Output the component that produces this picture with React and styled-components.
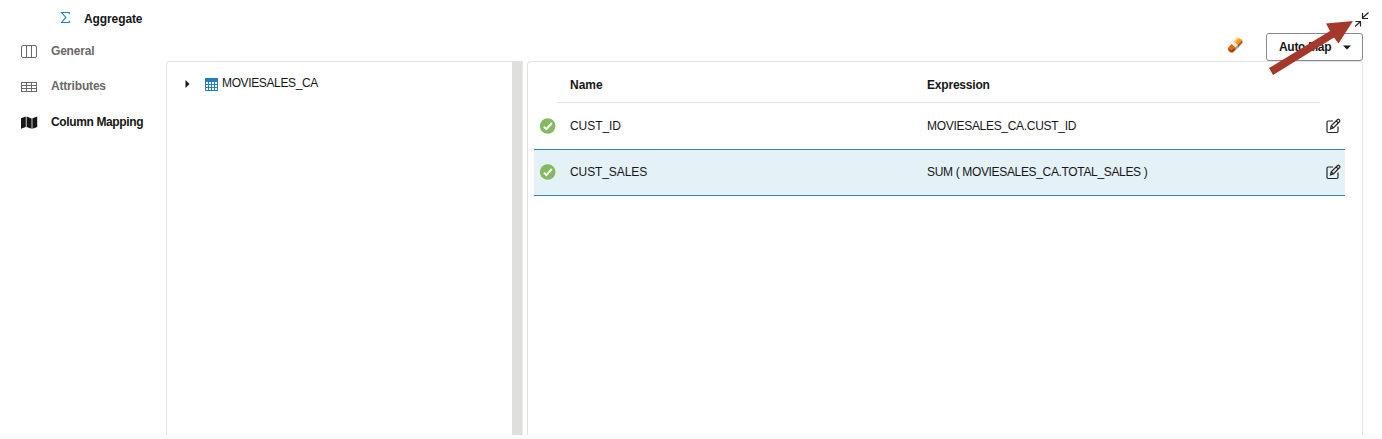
import React from "react";
import styled, { createGlobalStyle } from "styled-components";

const Global = createGlobalStyle`
  * { box-sizing: border-box; }
  body { margin: 0; background: #fff; }
`;

const Page = styled.div`
  position: relative;
  display: flex;
  width: 1382px;
  height: 439px;
  overflow: hidden;
  border-bottom: 4px solid #fbfbfb;
  background: #fff;
  color: #161616;
  font: 12px/16px "Liberation Sans", Arial, sans-serif;
`;

const Sidebar = styled.aside`
  width: 166px;
  padding-top: 11px;
  flex: none;
`;

const Heading = styled.div`
  display: flex;
  align-items: center;
  height: 16px;
  padding-left: 60px;
  gap: 13px;
  font-weight: 700;
  margin-bottom: 6px;
  svg { margin-top: -3px; }
`;

const NavItem = styled.div`
  display: flex;
  align-items: center;
  height: 35.5px;
  padding-left: 21px;
  gap: 13px;
  font-weight: 700;
  color: ${(p) => (p.$active ? "#161616" : "#6b6966")};
  svg { margin-top: 2px; }
`;

const Label = styled.span`
  display: inline-block;
  white-space: pre;
  letter-spacing: ${(p) => p.$track || 0}px;
`;

const Main = styled.main`
  width: 1197px;
  display: flex;
  flex-direction: column;
`;

const Toolbar = styled.div`
  display: flex;
  justify-content: flex-end;
  align-items: center;
  height: 61px;
  padding-top: 33px;
  gap: 22px;
  svg { flex: none; }
  > svg { margin-bottom: 3px; }
`;

const MapButton = styled.button`
  display: flex;
  align-items: center;
  width: 97px;
  height: 28px;
  padding: 0 11px 0 12px;
  justify-content: space-between;
  border: 1px solid #8b8987;
  border-radius: 3px;
  background: #fff;
  color: #161616;
  font: 700 12px/16px "Liberation Sans", Arial, sans-serif;
`;

const Panels = styled.div`
  display: flex;
  flex: 1;
`;

const TreePanel = styled.section`
  width: 346px;
  border: 1px solid #e4e3e2;
  border-width: 1px 0 0 1px;
  border-radius: 4px 0 0 0;
  padding: 14px 0 0 17px;
`;

const TreeRow = styled.div`
  display: flex;
  align-items: center;
  height: 16px;
  svg { flex: none; }
  span { margin-bottom: 2px; }
`;

const Splitter = styled.div`
  width: 11px;
  margin-right: 4px;
  background: #dfdfdd;
  border-right: 1px solid #e8e8e7;
`;

const MapPanel = styled.section`
  width: 836px;
  border: 1px solid #e4e3e2;
  border-bottom: 0;
  border-radius: 4px 4px 0 0;
  padding-left: 6px;
`;

const HeaderRow = styled.div`
  display: grid;
  grid-template-columns: 357px 1fr;
  align-items: center;
  width: 763px;
  height: 41px;
  margin-left: 23px;
  padding: 6px 0 0 13px;
  border-bottom: 1px solid #e6e5e4;
  font-weight: 700;
`;

const Row = styled.div`
  display: grid;
  grid-template-columns: 36px 357px 1fr 19px;
  align-items: center;
  width: 811px;
  height: ${(p) => (p.$selected ? 47 : 46)}px;
  padding-bottom: ${(p) => (p.$selected ? 1 : 0)}px;
  background: ${(p) => (p.$selected ? "#e4f1f7" : "transparent")};
  border: solid #3482a6;
  border-width: ${(p) => (p.$selected ? "1px 0" : "0")};
  svg { display: block; }
`;

const StatusCell = styled.span`
  padding-left: 6px;
`;

const Pointer = styled.svg`
  position: absolute;
  left: 1262px;
  top: 4px;
`;

const Sigma = () => (
  <svg width="11" height="13" viewBox="0 0 11 13" fill="none" stroke="#1681c4" strokeWidth="1.1">
    <path d="M9.3 3.2V1.5H1.6L5.9 6.4L1.6 11.5H9.3V9.8" />
  </svg>
);

const ColumnsIcon = () => (
  <svg width="17" height="14" viewBox="0 0 17 14" fill="none" stroke="currentColor">
    <rect x=".5" y=".5" width="15" height="12" rx="1.5" />
    <path d="M5.5 .5v12M10.5 .5v12" />
  </svg>
);

const GridIcon = () => (
  <svg width="17" height="12" viewBox="0 0 17 12" fill="none" stroke="currentColor">
    <rect x=".5" y="1.5" width="15" height="9" />
    <path d="M.5 4.5h15M.5 7.5h15M5.5 1.5v9M10.5 1.5v9" />
  </svg>
);

const MapIcon = () => (
  <svg width="17" height="13" viewBox="0 0 17 13" fill="currentColor">
    <path d="M0 2.2L4.8 .5V11L0 12.7zM5.6 .5l5 1.9v10.3l-5-1.8zM11.4 2.2L16.2 .5V11l-4.8 1.7z" />
  </svg>
);

const Eraser = () => (
  <svg width="17" height="17" viewBox="0 0 17 17">
    <path d="M3 14.5L15.8 3.6V6L6 16H3z" fill="#777" opacity=".45" />
    <path d="M6.6 4.7L10.4 .7L15.2 2.8L10.6 8z" fill="#f39a16" />
    <path d="M6.6 4.7L10.4 .7L12 1.4L8.1 5.9z" fill="#ffcd55" />
    <path d="M10.6 8L15.2 2.8V5.6L10.6 10.9z" fill="#a85a12" />
    <path d="M4.6 6.9L6.6 4.7L10.6 8L8.4 10.5z" fill="#f3f0ea" />
    <path d="M8.4 10.5L10.6 8v2.9L8.4 13z" fill="#a6a29e" />
    <path d="M1.3 10.4L4.6 6.9L8.4 10.5L5.2 14.2L1.5 13.3z" fill="#e3650d" />
    <path d="M1.3 10.4L5 12.8L8.4 10.5V13L5.2 15.6L1.6 14.2z" fill="#a34107" />
    <path d="M2 10.7L5 13.2" stroke="#ff8a20" />
  </svg>
);

const DownCaret = () => (
  <svg width="8" height="5" viewBox="0 0 8 5"><path d="M0 .5h8L4 4.5z" fill="#161616" /></svg>
);

const Expander = () => (
  <svg width="21" height="8" viewBox="0 0 21 8"><path d="M1.5 0L5.5 4L1.5 8z" fill="#161616" /></svg>
);

const TableIcon = () => (
  <svg width="17" height="14" viewBox="0 0 17 14">
    <path fill="#237fc4" d="M0 1h13v13H0z" />
    <path fill="#fff" d="M1 5h2v2H1zm3 0h2v2H4zm3 0h2v2H7zm3 0h2v2h-2zM1 8h2v2H1zm3 0h2v2H4zm3 0h2v2H7zm3 0h2v2h-2zM1 11h2v2H1zm3 0h2v2H4zm3 0h2v2H7zm3 0h2v2h-2z" />
  </svg>
);

const Check = () => (
  <svg width="16" height="16" viewBox="0 0 16 16">
    <circle cx="7.7" cy="8" r="7.8" fill="#82bb61" />
    <path d="M3.9 8.7L6.4 11.1L11.8 5" fill="none" stroke="#fff" strokeWidth="2" />
  </svg>
);

const Edit = () => (
  <svg width="15" height="16" viewBox="0 0 15 16" fill="none" stroke="#292522" strokeWidth="1.2">
    <path d="M7 3H2.2Q1 3 1 4.2v9.1Q1 14.5 2.2 14.5h8.6q1.2 0 1.2-1.2V8.5" />
    <path d="M4.5 10.9L5.2 7.8L11.6 1.5Q12.3 .9 13 1.5l.6.6q.6.7 0 1.4L7.4 9.9zM10.2 2.9l2 2M5.2 7.8l2.2 2.1" />
  </svg>
);

export default function App() {
  return (
    <>
      <Global />
      <Page>
        <Sidebar>
          <Heading><Sigma /><Label $track={-0.1}>Aggregate</Label></Heading>
          <NavItem><ColumnsIcon /><Label $track={-0.2}>General</Label></NavItem>
          <NavItem><GridIcon /><Label $track={-0.18}>Attributes</Label></NavItem>
          <NavItem $active><MapIcon /><Label $track={-0.37}>Column Mapping</Label></NavItem>
        </Sidebar>
        <Main>
          <Toolbar>
            <Eraser />
            <MapButton><Label $track={-0.3}>Auto Map</Label><DownCaret /></MapButton>
          </Toolbar>
          <Panels>
            <TreePanel>
              <TreeRow><Expander /><TableIcon /><Label $track={-0.37}>MOVIESALES_CA</Label></TreeRow>
            </TreePanel>
            <Splitter />
            <MapPanel>
              <HeaderRow><Label>Name</Label><Label $track={-0.2}>Expression</Label></HeaderRow>
              <Row>
                <StatusCell><Check /></StatusCell>
                <Label $track={-0.05}>CUST_ID</Label>
                <Label $track={-0.3}>MOVIESALES_CA.CUST_ID</Label>
                <Edit />
              </Row>
              <Row $selected>
                <StatusCell><Check /></StatusCell>
                <Label $track={-0.1}>CUST_SALES</Label>
                <Label $track={-0.34}>SUM ( MOVIESALES_CA.TOTAL_SALES )</Label>
                <Edit />
              </Row>
            </MapPanel>
          </Panels>
        </Main>
        <Pointer width="112" height="76" viewBox="1262 4 112 76">
          <path d="M1269 68L1330 31L1326 23.5L1353 21L1338.5 43.5L1334 37.5L1273 75z" fill="#a4382a" />
          <path d="M1368.5 12.5l-5.5 5M1362.5 13v5.5h5.5M1355 26.5l5.5-5M1355.5 21.5h5v5" fill="none" stroke="#252321" strokeWidth="1.2" />
        </Pointer>
      </Page>
    </>
  );
}
